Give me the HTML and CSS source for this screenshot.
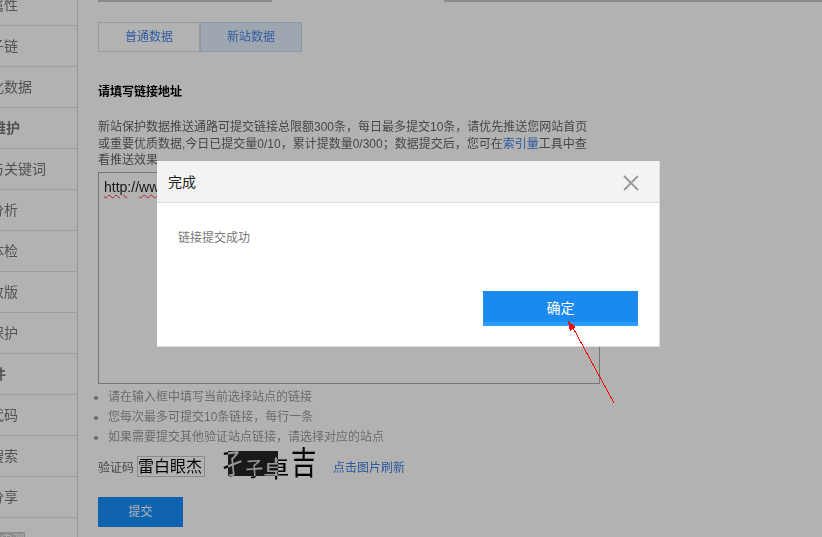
FILE: index.html
```html
<!DOCTYPE html>
<html lang="zh-CN">
<head>
<meta charset="utf-8">
<title>链接提交</title>
<link rel="stylesheet" href="styles.css">
</head>
<body>
<div class="page">
  <aside class="sidebar">
    <div class="row"><span class="label">站点属性</span></div>
    <div class="row"><span class="label">站点子链</span></div>
    <div class="row"><span class="label">结构化数据</span></div>
    <div class="row row-head"><span class="label">网站维护</span></div>
    <div class="row"><span class="label">流量与关键词</span></div>
    <div class="row"><span class="label">链接分析</span></div>
    <div class="row"><span class="label">网站体检</span></div>
    <div class="row"><span class="label">网站改版</span></div>
    <div class="row"><span class="label">闭站保护</span></div>
    <div class="row row-head"><span class="label">小组件</span></div>
    <div class="row"><span class="label">站点代码</span></div>
    <div class="row"><span class="label">站内搜索</span></div>
    <div class="row"><span class="label">站内分享</span></div>
    <div class="row"><span class="badge">内测</span></div>
  </aside>
  <main class="main">
    <div class="strip"><span class="strip-a"></span><span class="strip-gap"></span><span class="strip-b"></span></div>
    <div class="seg">
      <a class="seg-item">普通数据</a>
      <a class="seg-item seg-on">新站数据</a>
    </div>
    <h3 class="title">请填写链接地址</h3>
    <p class="desc">新站保护数据推送通路可提交链接总限额300条，每日最多提交10条，请优先推送您网站首页或重要优质数据,今日已提交量0/10，累计提数量0/300；数据提交后，您可在<a class="link">索引量</a>工具中查看推送效果.</p>
    <div class="area"><span class="sq">http</span>://<span class="sq">www</span>.</div>
    <ul class="tips">
      <li>请在输入框中填写当前选择站点的链接</li>
      <li>您每次最多可提交10条链接，每行一条</li>
      <li>如果需要提交其他验证站点链接，请选择对应的站点</li>
    </ul>
    <div class="verify">
      <span class="v-label">验证码</span>
      <span class="v-input">雷白眼杰</span>
      <svg class="captcha" width="95" height="40" viewBox="0 0 95 40" xmlns="http://www.w3.org/2000/svg">
        <rect width="95" height="40" fill="#fff"/>
        <rect x="6" y="5" width="50" height="25" fill="#252525"/>
        <text class="cap-t" transform="translate(1 29) rotate(-6) scale(.95 1.3)">孑</text>
        <text class="cap-t" transform="translate(24 31) rotate(-4) scale(.8 .95)">子</text>
        <text class="cap-t" transform="translate(41 31) scale(1.2 1.05)">卓</text>
        <text class="cap-t cap-big" transform="translate(69 28) scale(.85 1.05)">吉</text>
      </svg>
      <a class="link refresh">点击图片刷新</a>
    </div>
    <div class="submit">提交</div>
  </main>
</div>
<div class="overlay"></div>
<div class="dialog">
  <div class="dlg-head">
    <span class="dlg-title">完成</span>
    <svg class="dlg-x" width="16" height="16" viewBox="0 0 16 16" xmlns="http://www.w3.org/2000/svg"><path d="M1 1L15 15M15 1L1 15" stroke="#999" stroke-width="1.8" fill="none"/></svg>
  </div>
  <div class="dlg-body">链接提交成功</div>
  <div class="dlg-foot"><div class="dlg-btn">确定</div></div>
</div>
<svg class="arrow" width="822" height="537" viewBox="0 0 822 537" xmlns="http://www.w3.org/2000/svg" shape-rendering="crispEdges">
  <path d="M614 403L572 326" stroke="#f00" stroke-width="1" fill="none"/>
  <path d="M568 321L576 327L570 331Z" fill="#f00"/>
</svg>
</body>
</html>
```
FILE: styles.css
```css
* { box-sizing: border-box; }
html, body { margin: 0; padding: 0; height: 100%; }
body {
  background: #fff;
  overflow: hidden;
  font-family: "Liberation Sans", "Noto Sans CJK SC", sans-serif;
  font-size: 12px;
  color: #666;
}
.page { display: flex; height: 537px; overflow: hidden; }
.sidebar {
  width: 78px;
  flex: none;
  height: 537px;
  overflow: hidden;
  border-right: 1px solid #dcdcdc;
}
.row {
  height: 41px;
  line-height: 40px;
  border-bottom: 1px solid #e2e2e2;
  font-size: 14px;
  color: #777;
  white-space: nowrap;
}
.row:first-child { margin-top: -15px; }
.label { display: block; margin-left: -38px; }
.row-head { font-weight: bold; }
.row-head .label { margin-left: -36px; }
.badge {
  display: inline-block;
  width: 25px;
  height: 16px;
  line-height: 16px;
  margin-top: 14px;
  background: #c8c8c8;
  color: #fff;
  font-size: 12px;
  text-align: center;
  vertical-align: top;
}
.main { flex: 1; padding-left: 20px; min-width: 0; }
.strip { display: flex; height: 2px; }
.strip-a { width: 174px; border-bottom: 2px solid #c8c8c8; }
.strip-gap { width: 172px; }
.strip-b { flex: 1; border-bottom: 2px solid #c8c8c8; }
.seg { display: flex; margin-top: 20px; width: 204px; height: 30px; }
.seg-item {
  width: 102px;
  line-height: 28px;
  text-align: center;
  color: #4a86e8;
  border: 1px solid #dcdcdc;
}
.seg-on { background: #e2eefb; border-color: #c6ddf4; }
.title {
  margin: 31px 0 0;
  height: 18px;
  line-height: 18px;
  font-size: 12px;
  font-weight: bold;
  color: #000;
}
.desc {
  width: 492px;
  margin: 18px 0 0;
  line-height: 16.5px;
  color: #666;
}
.link { color: #3f7fe0; }
.area {
  width: 502px;
  height: 212px;
  margin-top: 3px;
  padding: 5px;
  border: 1px solid #a8a8a8;
  font-size: 14px;
  line-height: 18px;
  color: #222;
}
.sq { text-decoration: underline wavy #f33 1px; text-underline-offset: 2px; }
.tips {
  margin: 3px 0 0;
  padding: 0 0 0 10px;
  list-style: disc;
  color: #999;
}
.tips li { height: 20px; line-height: 20px; }
.verify { display: flex; align-items: center; height: 40px; margin-top: -1px; }
.v-label { width: 39px; color: #666; margin-top: 2px; }
.v-input {
  width: 68px;
  height: 21px;
  border: 1px solid #c8c8c8;
  font-size: 16px;
  line-height: 19px;
  color: #000;
  white-space: nowrap;
  overflow: hidden;
  margin-top: 2px;
}
.captcha { margin-left: 17px; flex: none; }
.cap-t {
  font-family: "Noto Sans CJK SC", sans-serif;
  font-size: 22px;
  fill: #fff;
  mix-blend-mode: difference;
}
.cap-big { font-size: 30px; }
.refresh { margin-left: 16px; margin-top: 2px; }
.submit {
  width: 85px;
  height: 30px;
  margin-top: 11px;
  background: #1790fb;
  color: #fff;
  line-height: 30px;
  text-align: center;
}
.overlay {
  position: fixed;
  inset: 0;
  background: rgba(0, 0, 0, .3);
}
.dialog {
  position: fixed;
  left: 157px;
  top: 161px;
  width: 503px;
  height: 186px;
  background: #fff;
  border-right: 1px solid #dedede;
  border-bottom: 1px solid #dedede;
  display: flex;
  flex-direction: column;
}
.dlg-head {
  display: flex;
  align-items: center;
  justify-content: space-between;
  height: 42px;
  padding: 0 20px 2px 11px;
  background: #f3f3f3;
  border-bottom: 1px solid #dedede;
  flex: none;
}
.dlg-title { font-size: 14px; color: #222; }
.dlg-x { margin-top: 4px; }
.dlg-body { margin-top: 27px; padding-left: 21px; color: #777; line-height: 17px; }
.dlg-foot { display: flex; justify-content: flex-end; margin-top: 44px; padding-right: 21px; }
.dlg-btn {
  width: 155px;
  height: 35px;
  background: #1b8aef;
  border-bottom: 4px solid #2a9dff;
  color: #fff;
  font-size: 14px;
  line-height: 34px;
  text-align: center;
}
.arrow { position: fixed; left: 0; top: 0; pointer-events: none; }
```
